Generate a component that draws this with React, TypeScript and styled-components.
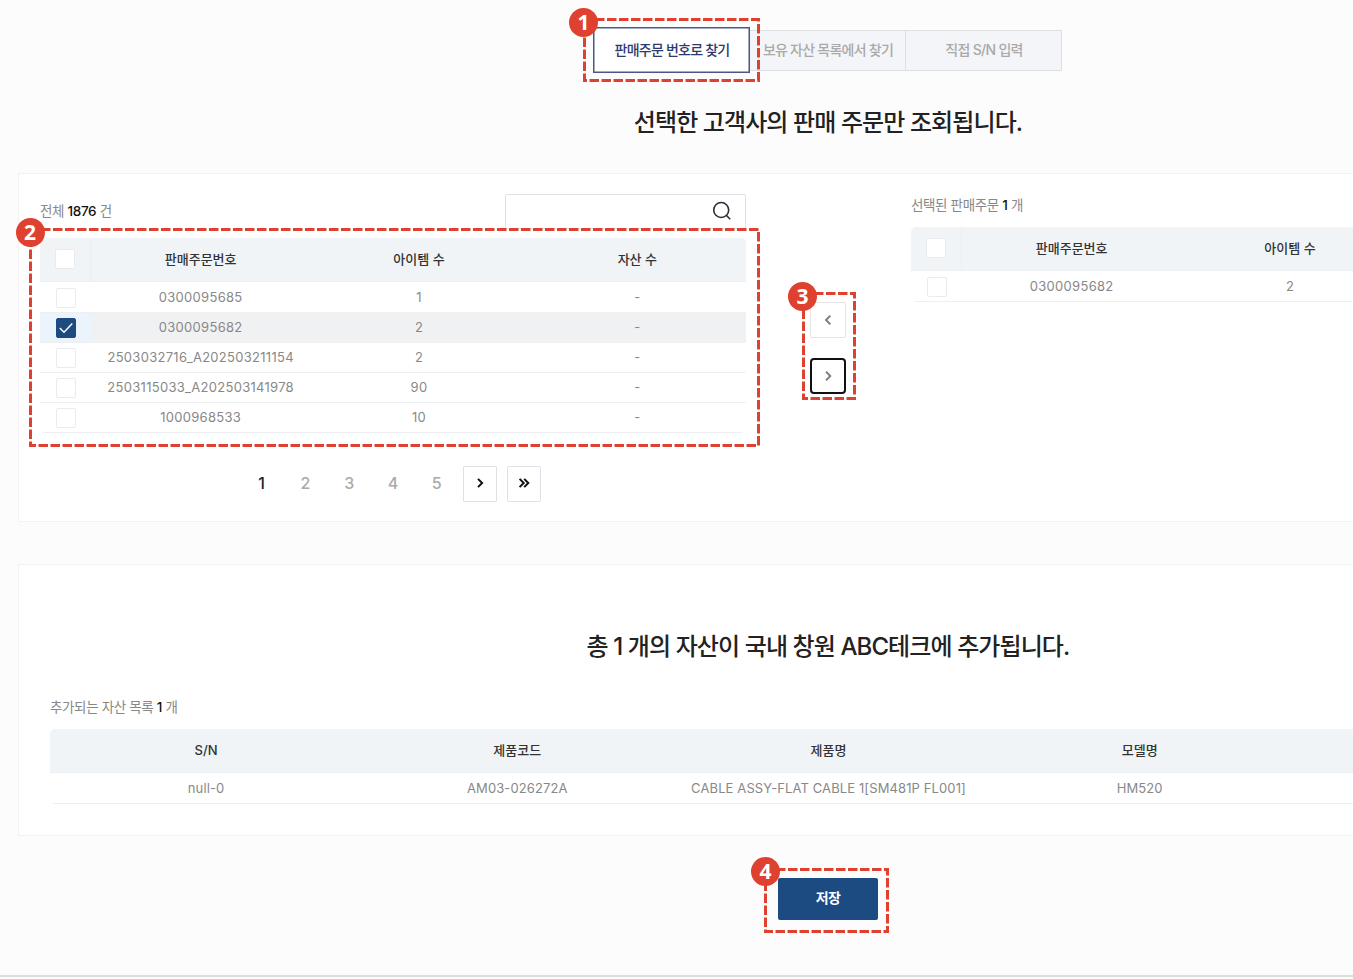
import React from 'react';
import styled, { createGlobalStyle, css } from 'styled-components';

const Global = createGlobalStyle`
  *, *::before, *::after { box-sizing: border-box; }
  body {
    margin: 0;
    background: #fcfcfc;
    font-family: Inter, "Noto Sans CJK KR", sans-serif;
    overflow: hidden;
  }
`;

const Viewport = styled.div`
  position: relative;
  height: 979px;
  overflow: hidden;
  background: #fcfcfc;
`;

const Page = styled.main`
  display: flex;
  flex-direction: column;
  width: 1656px;
  height: 977px;
  padding: 27px 18px 0;
  border-bottom: 2px solid #dedede;
`;

const Tabs = styled.div`
  display: flex;
  justify-content: center;
  align-items: center;
  height: 46px;
  padding-right: 1px;
`;

const Tab = styled.button<{ $active?: boolean; $spacing: string }>`
  width: 157px;
  height: 41px;
  margin-left: -1px;
  padding: 0 0 1px 1px;
  border: 1px solid #dcdfe4;
  background: #f4f5f8;
  color: #a9a9a9;
  font: 500 14px/20px Inter, "Noto Sans CJK KR", sans-serif;
  letter-spacing: ${(p) => p.$spacing};
  white-space: nowrap;
  ${(p) => p.$active && css`
    position: relative;
    height: 46px;
    margin-left: 0;
    border: 1px solid #4a5787;
    box-shadow: inset 0 0 0 0.5px #4a5787;
    background: #fff;
    color: #2d3a70;
  `}
`;

const Heading = styled.h2<{ $top: number }>`
  margin: ${(p) => p.$top}px 0 0;
  height: 36px;
  text-align: center;
  font-size: 24px;
  line-height: 36px;
  font-weight: 500;
  letter-spacing: -0.9px;
  color: #222;
`;

const Card = styled.section<{ $top: number; $height: number }>`
  margin-top: ${(p) => p.$top}px;
  height: ${(p) => p.$height}px;
  border: 1px solid #f2f2f3;
  background: #fff;
`;

const Transfer = styled(Card)`
  display: grid;
  grid-template-columns: 706px 165px 706px;
  padding: 20px 21px 0;
`;

const Column = styled.div`
  display: flex;
  flex-direction: column;
`;

const ListTop = styled.div`
  display: flex;
  justify-content: space-between;
  height: 44px;
`;

const Caption = styled.p<{ $top?: number }>`
  margin: ${(p) => p.$top ?? 0}px 0 0;
  height: 20px;
  font-size: 13.5px;
  line-height: 21px;
  letter-spacing: -0.36px;
  color: #888;
  b { font-weight: 500; color: #111; }
`;

const Search = styled.label`
  display: flex;
  align-items: center;
  justify-content: flex-end;
  width: 241px;
  height: 35px;
  padding: 0 13px 1px 0;
  border: 1px solid #dee2e6;
  border-radius: 2px;
`;

const Table = styled.div<{ $top?: number }>`
  margin-top: ${(p) => p.$top ?? 0}px;
  border-radius: 5px;
  overflow: hidden;
  flex: none;
`;

const Row = styled.div<{ $cols: string; $head?: boolean; $selected?: boolean; $spacing?: string }>`
  display: grid;
  grid-template-columns: ${(p) => p.$cols};
  height: ${(p) => (p.$head ? 44.4 : 30.2)}px;
  border-bottom: 1px solid #eeeff1;
  background: ${(p) => (p.$head ? '#f1f4f7' : p.$selected ? '#f0f1f3' : '#fff')};
  color: ${(p) => (p.$head ? '#333' : '#888')};
  font-size: 13px;
  font-weight: ${(p) => (p.$head ? 500 : 400)};
  letter-spacing: ${(p) => p.$spacing ?? 'normal'};
`;

const Cell = styled.div<{ $head?: boolean }>`
  display: flex;
  align-items: center;
  justify-content: center;
  padding: ${(p) => (p.$head ? '0 0 2px 1px' : '0 0 0.5px 1px')};
  white-space: nowrap;
`;

const CheckCell = styled(Cell)<{ $selected?: boolean }>`
  padding: ${(p) => (p.$head ? '0 1px 1px 0' : '1.5px 0 0 1px')};
  border-right: 1px solid ${(p) => (p.$head ? '#eceff2' : 'transparent')};
  background: ${(p) => (p.$selected ? '#ebf3fc' : 'transparent')};
`;

const Box = styled.span<{ $checked?: boolean }>`
  display: flex;
  width: 20px;
  height: 20px;
  border: 1px solid ${(p) => (p.$checked ? '#1c4b82' : '#e9ebef')};
  border-radius: 2px;
  background: ${(p) => (p.$checked ? '#1c4b82' : '#fff')};
`;

const Movers = styled.div`
  display: flex;
  flex-direction: column;
  align-items: center;
  gap: 20px;
  padding: 108px 2px 0 0;
`;

const MoveButton = styled.button<{ $focused?: boolean }>`
  display: flex;
  align-items: center;
  justify-content: center;
  width: 36px;
  height: 36px;
  padding: 0;
  background: #fff;
  border: ${(p) => (p.$focused ? '2px solid #101010' : '1px solid #e3e3e5')};
  border-radius: ${(p) => (p.$focused ? 4 : 2)}px;
`;

const Pager = styled.nav`
  display: flex;
  justify-content: center;
  gap: 9.8px;
  margin-top: 33px;
  padding-right: 1px;
`;

const PageItem = styled.button<{ $current?: boolean; $boxed?: boolean }>`
  display: flex;
  align-items: center;
  justify-content: center;
  width: 34px;
  height: 36px;
  padding: ${(p) => (p.$boxed ? '0 0 2px' : '0 0 2px 1px')};
  background: #fff;
  border: ${(p) => (p.$boxed ? '1px solid #dee2e7' : '0')};
  border-radius: 1px;
  font: 500 16px/24px Inter, sans-serif;
  color: ${(p) => (p.$current ? '#222' : '#aaa')};
`;

const Assets = styled(Card)`
  padding: 0 31px;
`;

const Save = styled.button`
  align-self: center;
  width: 100px;
  height: 42px;
  margin-top: 42px;
  padding: 0 0 2px;
  border: 0;
  border-radius: 2px;
  background: #1c4b82;
  color: #fff;
  font: 700 14px/20px Inter, "Noto Sans CJK KR", sans-serif;
  letter-spacing: -0.6px;
`;

const Outline = styled.svg`
  position: absolute;
  overflow: visible;
`;

const Badge = styled.span`
  position: absolute;
  display: flex;
  align-items: center;
  justify-content: center;
  width: 29px;
  height: 29px;
  border-radius: 50%;
  background: #de412f;
  color: #fff;
  font: 700 21px/29px "Noto Sans", sans-serif;
`;

type CalloutProps = { n: number; x: number; y: number; w: number; h: number; bx: number; by: number };

const Callout = ({ n, x, y, w, h, bx, by }: CalloutProps) => (
  <>
    <Outline width={w} height={h} style={{ left: x, top: y }}>
      <path
        d={`M0 1.5H${w - 1.5}V${h - 1.5}H1.5V0`}
        fill="none" stroke="#de412f" strokeWidth="3" strokeDasharray="9.5 2.5"
      />
    </Outline>
    <Badge style={{ left: bx, top: by }}>{n}</Badge>
  </>
);

const callouts: CalloutProps[] = [
  { n: 1, x: 583, y: 18, w: 177, h: 64, bx: 569, by: 8 },
  { n: 2, x: 29, y: 228, w: 731, h: 219, bx: 15.5, by: 218 },
  { n: 3, x: 802, y: 292, w: 54, h: 108, bx: 788, by: 282 },
  { n: 4, x: 764, y: 868, w: 125, h: 65, bx: 751, by: 857 },
];

const Arrow = ({ d, color, width }: { d: string; color: string; width: number }) => (
  <svg width="16" height="16" viewBox="0 0 16 16" fill="none" stroke={color} strokeWidth={width}>
    <path d={d} />
  </svg>
);

const orderCols = '51px repeat(3, 1fr)';
const assetCols = 'repeat(5, 1fr)';

const orders = [
  ['0300095685', '1', '-'],
  ['0300095682', '2', '-'],
  ['2503032716_A202503211154', '2', '-'],
  ['2503115033_A202503141978', '90', '-'],
  ['1000968533', '10', '-'],
];

type OrderTableProps = { heads: string[]; rows: string[][]; selected?: number; top?: number };

const OrderTable = ({ heads, rows, selected, top }: OrderTableProps) => (
  <Table $top={top}>
    <Row $cols={orderCols} $head>
      <CheckCell $head><Box /></CheckCell>
      {heads.map((t) => <Cell key={t} $head>{t}</Cell>)}
    </Row>
    {rows.map((r, i) => (
      <Row key={r[0]} $cols={orderCols} $selected={i === selected} $spacing="0.29px">
        <CheckCell $selected={i === selected}>
          <Box $checked={i === selected}>
            {i === selected && (
              <svg width="18" height="18" viewBox="0 0 18 18" fill="none" stroke="#fff" strokeWidth="1.5">
                <path d="M2.8 9L7 13.2L15.3 4.6" />
              </svg>
            )}
          </Box>
        </CheckCell>
        {r.map((t, k) => <Cell key={k}>{t}</Cell>)}
      </Row>
    ))}
  </Table>
);

export default function App() {
  return (
    <Viewport>
      <Global />
      <Page>
        <Tabs>
          <Tab $active $spacing="-0.78px">판매주문 번호로 찾기</Tab>
          <Tab $spacing="-0.75px">보유 자산 목록에서 찾기</Tab>
          <Tab $spacing="-0.7px">직접 S/N 입력</Tab>
        </Tabs>
        <Heading $top={32}>선택한 고객사의 판매 주문만 조회됩니다.</Heading>

        <Transfer $top={32} $height={349}>
          <Column>
            <ListTop>
              <Caption $top={7}>전체 <b>1876</b> 건</Caption>
              <Search>
                <svg width="20" height="20" viewBox="0 0 20 20" fill="none" stroke="#2b2f33" strokeWidth="1.6">
                  <circle cx="9.2" cy="9" r="7.5" />
                  <path d="M14.5 14.5L18.2 18.2" />
                </svg>
              </Search>
            </ListTop>
            <OrderTable heads={['판매주문번호', '아이템 수', '자산 수']} rows={orders} selected={1} />
            <Pager>
              {[1, 2, 3, 4, 5].map((n) => <PageItem key={n} $current={n === 1}>{n}</PageItem>)}
              <PageItem $boxed><Arrow d="M6 3.9L10.1 8L6 12.1" color="#111" width={2} /></PageItem>
              <PageItem $boxed><Arrow d="M3.6 3.9L7.7 8L3.6 12.1M8.2 3.9L12.3 8L8.2 12.1" color="#111" width={2} /></PageItem>
            </Pager>
          </Column>
          <Movers>
            <MoveButton><Arrow d="M10.3 3.6L6 8L10.3 12.4" color="#7c7c7c" width={1.9} /></MoveButton>
            <MoveButton $focused><Arrow d="M6 3.6L10.3 8L6 12.4" color="#7c7c7c" width={1.9} /></MoveButton>
          </Movers>
          <Column>
            <Caption $top={1}>선택된 판매주문 <b>1</b> 개</Caption>
            <OrderTable heads={['판매주문번호', '아이템 수']} rows={[['0300095682', '2']]} top={12} />
          </Column>
        </Transfer>

        <Assets $top={42} $height={272}>
          <Heading $top={64}>총 1 개의 자산이 국내 창원 ABC테크에 추가됩니다.</Heading>
          <Caption $top={32}>추가되는 자산 목록 <b>1</b> 개</Caption>
          <Table $top={12}>
            <Row $cols={assetCols} $head>
              {['S/N', '제품코드', '제품명', '모델명'].map((t) => <Cell key={t} $head>{t}</Cell>)}
            </Row>
            <Row $cols={assetCols} $spacing="0.11px">
              {['null-0', 'AM03-026272A', 'CABLE ASSY-FLAT CABLE 1[SM481P FL001]', 'HM520'].map((t) => <Cell key={t}>{t}</Cell>)}
            </Row>
          </Table>
        </Assets>

        <Save>저장</Save>
      </Page>
      {callouts.map((c) => <Callout key={c.n} {...c} />)}
    </Viewport>
  );
}
